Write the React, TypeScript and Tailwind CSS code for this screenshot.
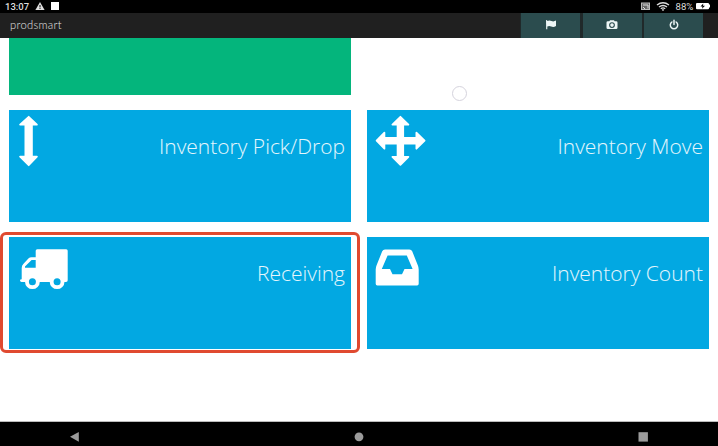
import type { ReactNode } from "react";

function UpDown() {
  return (
    <path
      d="M19.7 6.8 L27.9 14.6 H22.9 V46.6 H27.9 L19.7 55.2 L11.1 46.6 H16.4 V14.6 H11.1 Z"
      fill="white"
      stroke="white"
      strokeWidth="1.8"
      strokeLinejoin="round"
    />
  );
}

function Move() {
  return (
    <path
      d="M33.4 6.8 L41.4 14.6 H36.2 V27.9 H49.4 V22.7 L57.6 30.7 L49.4 38.7 V33.5 H36.2 V46.8 H41.4 L33.4 54.8 L25.4 46.8 H30.6 V33.5 H17.4 V38.7 L9.6 30.7 L17.4 22.7 V27.9 H30.6 V14.6 H25.4 Z"
      fill="white"
      stroke="white"
      strokeWidth="1.8"
      strokeLinejoin="round"
    />
  );
}

function Truck() {
  return (
    <g fill="white">
      <path
        fillRule="evenodd"
        d="M28.3 12.3 H57.2 Q58.7 12.3 58.7 13.8 V43.2 Q58.7 44.9 57 44.9 H12.6 Q11 44.9 11 43.2 Q11 42.2 12.7 42.2 V31 Q12.7 28.6 14.3 27 L19.4 21.6 Q20.7 20.3 22.5 20.3 H26.7 V13.8 Q26.7 12.3 28.3 12.3 Z M26.7 23 H22.6 L16 29.6 V30.7 H26.7 Z"
      />
      <circle cx="23.4" cy="44.7" r="7.4" />
      <circle cx="48.1" cy="44.7" r="7.4" />
      <circle cx="23.4" cy="44.7" r="3.5" fill="#02a8e2" />
      <circle cx="48.1" cy="44.7" r="3.5" fill="#02a8e2" />
    </g>
  );
}

function Inbox() {
  return (
    <path
      fill="white"
      fillRule="evenodd"
      d="M18 12.5 H42.4 Q44.4 12.5 45.2 14.3 L50.8 28.2 Q51.7 30.4 51.7 32.4 V46.8 Q51.7 48.4 50.1 48.4 H10.3 Q8.7 48.4 8.7 46.8 V32.4 Q8.7 30.4 9.6 28.2 L15.2 14.3 Q16 12.5 18 12.5 Z M20.6 18.4 L14.8 32 H23 L25.5 37.3 H35 L37.5 32 H45.6 L39.8 18.4 Z"
    />
  );
}

function Tile({ label, children }: { label: string; children: ReactNode }) {
  return (
    <div className="flex h-28 justify-between bg-[#02a8e2] pr-1.5">
      <svg className="h-[60px] w-[62px] shrink-0" viewBox="0 0 62 60">
        {children}
      </svg>
      <span className="mt-[21px] text-[21px] leading-[31px] font-light whitespace-nowrap text-white/90">
        {label}
      </span>
    </div>
  );
}

function StatusBar() {
  return (
    <div className="flex h-[13px] items-center justify-between bg-black pr-[8px] pl-[5px] font-[Roboto,sans-serif] text-[9.5px] leading-[13px] text-[#dedede]">
      <div className="flex items-center">
        <span className="w-[30px] font-medium">13:07</span>
        <svg className="h-[13px] w-7" viewBox="0 0 28 13">
          <path d="M5 2 L9.6 10 H0.4 Z" fill="#dedede" />
          <path d="M5 5 V7.4 M5 8.1 V9" stroke="black" />
          <rect x="16" y="2" width="8" height="8" fill="white" />
        </svg>
      </div>
      <div className="flex items-center">
        <svg className="mr-[6px] h-[13px] w-[30px]" viewBox="0 0 30 13">
          <rect x="1.5" y="3" width="8" height="6.5" fill="#666" stroke="#bbb" />
          <path d="M3 5 H8 V8.5 M3 7 L5 9" stroke="#ddd" fill="none" />
          <g fill="none" stroke="#ddd" strokeWidth="1.4">
            <path d="M17 5 Q23 0.4 29 5" />
            <path d="M19 7 Q23 3.9 27 7" />
            <path d="M20.8 8.8 Q23 7 25.2 8.8" />
          </g>
          <circle cx="23" cy="9.9" r="0.9" fill="#ddd" />
        </svg>
        <span className="w-[20.5px] whitespace-nowrap text-[9.6px]">88%</span>
        <svg className="h-[13px] w-[14px]" viewBox="0 0 14 13">
          <rect x="0" y="3" width="13" height="6.2" rx="1" fill="white" />
          <rect x="12.5" y="4.5" width="1.5" height="3" fill="white" />
          <path d="M7.3 3.6 L4.5 6.5 H6.5 L6 8.8 L9 5.8 H7 Z" fill="black" />
        </svg>
      </div>
    </div>
  );
}

function HeaderButton({ children }: { children: ReactNode }) {
  return (
    <div className="flex h-full w-[59px] justify-center bg-[#2b4c4e]">
      <svg className="h-6 w-6" viewBox="0 0 24 24" fill="#edf6f6">
        {children}
      </svg>
    </div>
  );
}

export default function App() {
  return (
    <div className="flex h-[446px] w-[718px] flex-col overflow-hidden bg-white font-['Open_Sans',sans-serif]">
      <StatusBar />
      <header className="flex h-[25px] shrink-0 justify-between bg-[#202020] pr-[15px] pl-[10px]">
        <span className="font-[Lato,sans-serif] text-[11.2px] leading-[24px] font-light tracking-[0.3px] text-[#e4e4e4]">
          prodsmart
        </span>
        <div className="flex gap-[2.5px] bg-[#20292a] pl-px">
          <HeaderButton>
            <path d="M7 7.2 Q7.7 6.8 8.3 7.4 V8 Q10.5 6.9 12.5 8 Q14.5 9 17 7.6 V13 Q14.5 14.6 12.2 13.5 Q10.2 12.6 8.3 13.5 V16.3 H7.2 Z" />
          </HeaderButton>
          <HeaderButton>
            <path
              fillRule="evenodd"
              d="M9.4 8.2 L10 7.2 H14 L14.6 8.2 H16.2 Q17.5 8.2 17.5 9.5 V14.8 Q17.5 16 16.2 16 H7.8 Q6.5 16 6.5 14.8 V9.5 Q6.5 8.2 7.8 8.2 Z M12 9.2 A2.9 2.9 0 1 0 12 15 A2.9 2.9 0 1 0 12 9.2 Z"
            />
            <circle cx="12" cy="12.1" r="1.8" />
          </HeaderButton>
          <HeaderButton>
            <path
              d="M9.9 9 A3.7 3.7 0 1 0 14.1 9 M12 7.3 V11.5"
              fill="none"
              stroke="#edf6f6"
              strokeWidth="1.5"
              strokeLinecap="round"
            />
          </HeaderButton>
        </div>
      </header>
      <main className="relative h-[383px] shrink-0 px-[9px]">
        <div className="h-[57px] w-[342px] bg-[#04b57c]" />
        <div className="mt-[15px] grid grid-cols-[342px_342px] gap-x-4 gap-y-[15px]">
          <Tile label="Inventory Pick/Drop">
            <UpDown />
          </Tile>
          <Tile label="Inventory Move">
            <Move />
          </Tile>
          <Tile label="Receiving">
            <Truck />
          </Tile>
          <Tile label="Inventory Count">
            <Inbox />
          </Tile>
        </div>
        <div className="absolute top-[194px] left-0 h-[121px] w-[360px] rounded-[6px] border-3 border-[#e04a30]" />
        <div className="absolute top-[48px] left-[452px] size-[15px] rounded-full border border-[#d5d3dd]" />
      </main>
      <nav className="flex h-[25px] shrink-0 border-t border-[#bcbcbc] bg-black">
        <svg className="h-6 w-full" viewBox="0 0 718 24" fill="#9b9b9b">
          <path d="M70 14.8 L78.8 10 V19.8 Z" />
          <circle cx="359" cy="14.8" r="4.4" />
          <rect x="638.5" y="10.2" width="9.4" height="9.4" />
        </svg>
      </nav>
    </div>
  );
}
